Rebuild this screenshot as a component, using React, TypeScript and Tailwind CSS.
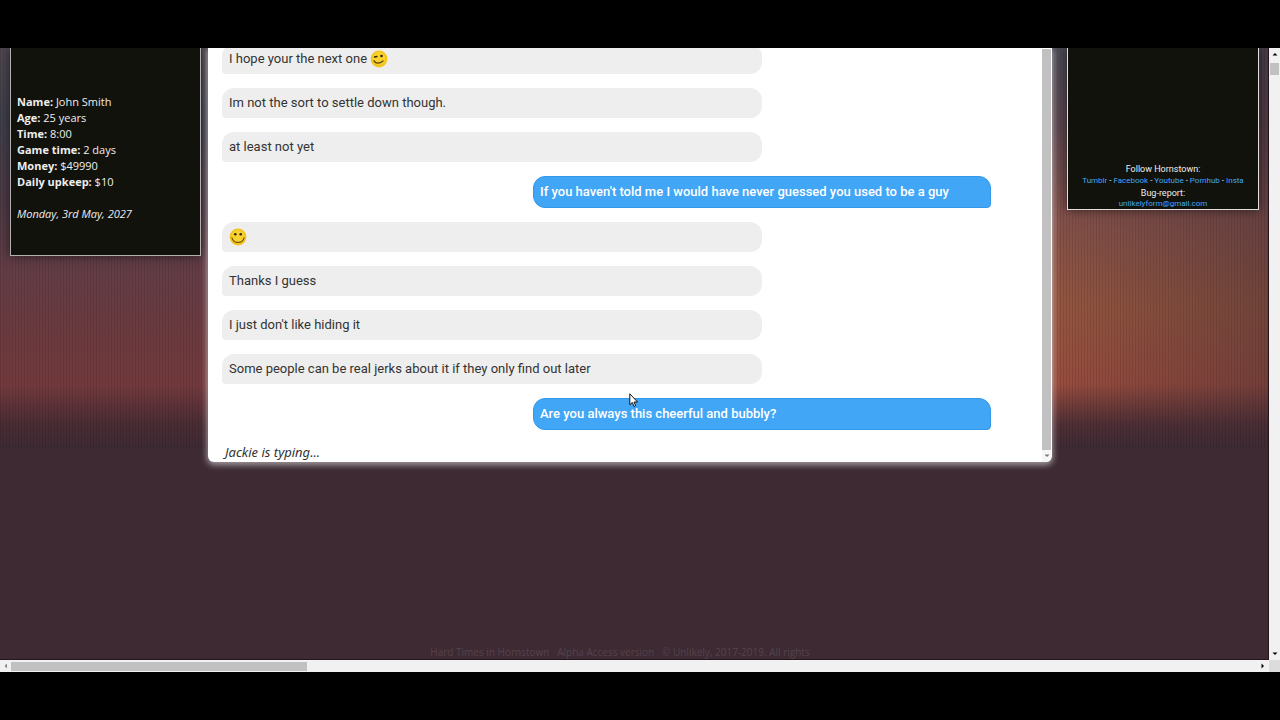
import React from "react";

type Message = { text?: string; emoji?: "smile" | "wink"; mine?: boolean };

const messages: Message[] = [
  { text: "I hope your the next one", emoji: "wink" },
  { text: "Im not the sort to settle down though." },
  { text: "at least not yet" },
  { text: "If you haven't told me I would have never guessed you used to be a guy", mine: true },
  { emoji: "smile" },
  { text: "Thanks I guess" },
  { text: "I just don't like hiding it" },
  { text: "Some people can be real jerks about it if they only find out later" },
  { text: "Are you always this cheerful and bubbly?", mine: true },
];

const stats = [
  ["Name:", "John Smith"],
  ["Age:", "25 years"],
  ["Time:", "8:00"],
  ["Game time:", "2 days"],
  ["Money:", "$49990"],
  ["Daily upkeep:", "$10"],
];

const socials = ["Tumblr", "Facebook", "Youtube", "Pornhub", "Insta"];

function Smiley({ kind }: { kind: "smile" | "wink" }) {
  return (
    <svg viewBox="0 0 18 18" className="size-[18px] shrink-0" aria-label={kind}>
      <circle cx="9" cy="9" r="8.4" fill="#f3c41a" />
      <circle cx="9" cy="8.500" r="6.500" fill="#f9d22f" />
      {kind === "smile" ? (
        <>
          <circle cx="6.3" cy="6.2" r="1.300" fill="#33270c" />
          <circle cx="11.700" cy="6.2" r="1.300" fill="#33270c" />
          <path d="M3 9.800c.8 3 3 4.600 6 4.600s5.200-1.600 6-4.600" fill="none" stroke="#6b500c" strokeWidth="1.100" strokeLinecap="round" />
        </>
      ) : (
        <>
          <path d="M4.500 7l2.500-.5" stroke="#33270c" strokeWidth="1.300" strokeLinecap="round" />
          <circle cx="11.500" cy="6" r="1.300" fill="#33270c" />
          <path d="M4 10.800c2 3 5.500 3 9 .2" fill="none" stroke="#5a4208" strokeWidth="1.300" strokeLinecap="round" />
        </>
      )}
    </svg>
  );
}

function Bubble({ text, emoji, mine }: Message) {
  if (mine) {
    return (
      <div className="flex h-8 w-[458px] shrink-0 items-center self-end rounded-xl rounded-br-sm border border-[#3597ea] bg-[#41a6f6] px-1.5 font-medium whitespace-nowrap text-white">
        {text}
      </div>
    );
  }
  return (
    <div className="flex h-[30px] w-[540px] shrink-0 items-center gap-[3px] rounded-xl rounded-bl-sm bg-[#eeeeee] px-[7px] text-[#333]">
      {text}
      {emoji && <Smiley kind={emoji} />}
    </div>
  );
}

function Arrow({ d, className }: { d: string; className: string }) {
  return (
    <svg viewBox="0 0 6 6" className={`size-1.5 ${className}`}>
      <path d={d} fill="currentColor" />
    </svg>
  );
}

export default function App() {
  return (
    <div className="h-screen bg-black py-12 font-['Open_Sans',sans-serif] text-[13px]">
      <div className="relative flex h-full flex-col overflow-hidden">
        <div className="flex min-h-0 flex-1">
          <main className="relative isolate flex min-w-0 flex-1 flex-col overflow-hidden border-r border-b border-[#25151d] bg-[#3d2a33]">
            {/* blurry city backdrop */}
            <div className="absolute inset-x-0 top-0 -z-10 flex h-[400px] justify-between">
              <div className="w-1/2 bg-[repeating-linear-gradient(90deg,#00000018_0px,#00000018_1px,transparent_1px,transparent_3px),linear-gradient(180deg,#50484f_0%,#40404c_18%,#503b45_40%,#633d46_55%,#6b3a3f_72%,#733a3d_84%,#4a2c34_94%,#3d2a33_100%)]" />
              <div className="w-1/2 bg-[repeating-linear-gradient(90deg,#00000018_0px,#00000018_1px,transparent_1px,transparent_3px),linear-gradient(90deg,transparent_66%,#3d2a3366_100%),linear-gradient(180deg,#4a4a54_0%,#5c464e_20%,#82504a_42%,#94553f_65%,#984c3e_84%,#502f35_94%,#3d2a33_100%)]" />
            </div>

            <div className="flex items-start pr-[9px] pl-[10px]">
              <aside className="h-[208px] w-[191px] shrink-0 border border-t-0 border-[#b5aeb0] bg-[#12120d] px-1.5 pt-[46px] text-[11px] leading-4 text-[#eee] shadow-[0_0_10px_#00000088]">
                {stats.map(([label, value]) => (
                  <p key={label}>
                    <b>{label}</b> {value}
                  </p>
                ))}
                <p className="mt-4 italic">Monday, 3rd May, 2027</p>
              </aside>

              <section className="mr-[15px] ml-[7px] flex h-[414px] min-w-0 flex-1 overflow-hidden rounded-b-md bg-white pr-px font-['Roboto',sans-serif] shadow-[0_2px_6px_1px_#ffffff88]">
                <div className="flex min-w-0 flex-1 flex-col justify-end gap-3.5 pr-[51px] pl-3.5">
                  {messages.map((m, i) => (
                    <Bubble key={i} {...m} />
                  ))}
                  <p className="-mt-0.5 h-5 shrink-0 px-[3px] font-['Noto_Sans',sans-serif] leading-5 text-[#333] italic">Jackie is typing...</p>
                </div>
                <div className="flex w-[9px] flex-col items-center pt-px">
                  <div className="w-full flex-1 bg-[#c1c1c1]" />
                  <div className="flex h-3 w-full items-center justify-center bg-[#f6f6f6]">
                    <Arrow d="M.5 1.500h5L3 4z" className="text-[#777]" />
                  </div>
                </div>
              </section>

              <aside className="flex h-[162px] w-48 shrink-0 flex-col justify-end border border-t-0 border-[#e4dede] bg-[#12120d] text-center font-['Roboto',sans-serif] text-[9px] leading-3 text-[#eee] shadow-[0_0_10px_#00000088]">
                <p>Follow Hornstown:</p>
                <p className="text-[8px] leading-3">
                  {socials.map((s, i) => (
                    <React.Fragment key={s}>
                      {i > 0 && " - "}
                      <a href="#" className="text-[#41a6f6]">{s}</a>
                    </React.Fragment>
                  ))}
                </p>
                <p>Bug-report:</p>
                <p className="text-[8px] leading-[10px]">
                  <a href="#" className="text-[#41a6f6]">unlikelyform@gmail.com</a>
                </p>
              </aside>
            </div>

            <footer className="mt-auto pr-7 text-center text-[10px] leading-[14px] whitespace-pre text-[#56424c]">
              Hard Times in Hornstown   Alpha Access version   © Unlikely, 2017-2019. All rights
            </footer>
          </main>

          <div className="flex w-[11px] flex-col items-center justify-between bg-[#f1f1f1] py-[3px]">
            <div className="flex w-full flex-col items-center gap-1.5">
              <Arrow d="M.5 4.500h5L3 2z" className="text-black" />
              <div className="h-3 w-[9px] bg-[#c1c1c1]" />
            </div>
            <Arrow d="M.5 1.500h5L3 4z" className="text-black" />
          </div>
        </div>

        <div className="flex h-3 shrink-0 items-center bg-[#f1f1f1]">
          <div className="flex min-w-0 flex-1 items-center justify-between px-[3px]">
            <div className="flex flex-1 items-center gap-[2px]">
              <Arrow d="M4 .5v5L1.500 3z" className="text-[#888]" />
              <div className="h-[9px] w-[296px] bg-[#c1c1c1]" />
            </div>
            <Arrow d="M1.500 .5v5L4 3z" className="text-black" />
          </div>
          <div className="h-full w-[11px] bg-[#dcdcdc]" />
        </div>

        {/* mouse pointer */}
        <svg viewBox="0 0 10 15" className="absolute top-[345px] left-[629px] h-[15px] w-2.5">
          <path d="M.8.8v11l2.500-2.300 1.700 4 1.700-.8L5 9h3.600z" fill="#fff" stroke="#111" strokeWidth="1" />
        </svg>
      </div>
    </div>
  );
}
